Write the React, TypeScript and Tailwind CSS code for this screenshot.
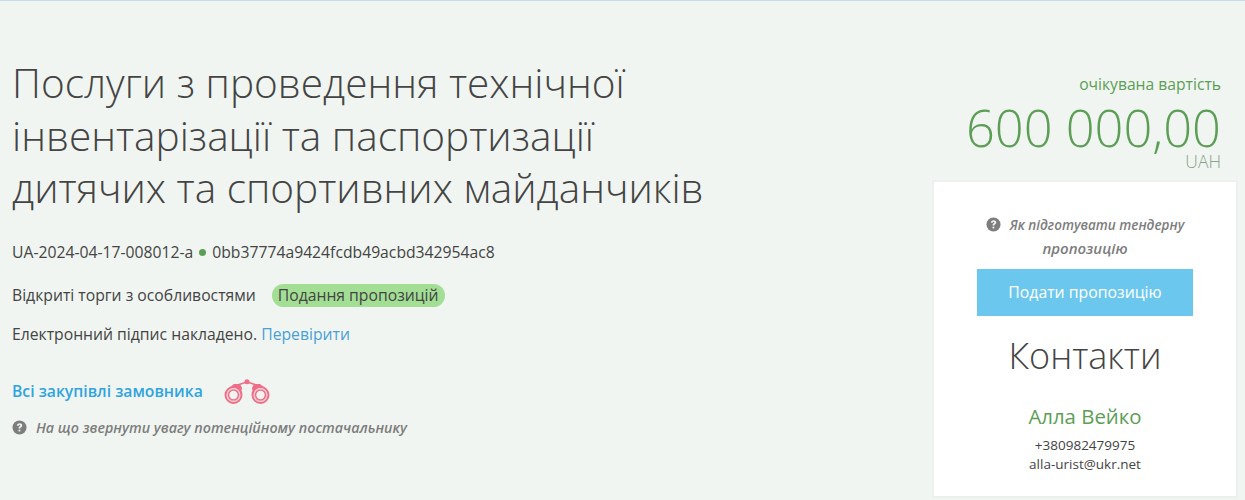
const HelpIcon = ({ className }: { className: string }) => (
  <svg viewBox="0 0 16 16" className={className}>
    <circle cx="8" cy="8" r="7.5" fill="#7d7d7d" />
    <path d="M5.2 6.1c0-1.6 1.2-2.6 2.9-2.6 1.6 0 2.8 1 2.8 2.3 0 1.1-.7 1.6-1.4 2.1-.5.3-.7.6-.7 1.2H7c0-1.1.3-1.6 1-2.1.6-.4.9-.7.9-1.1 0-.5-.3-.8-.8-.8-.6 0-1 .4-1 1.1z" fill="#f0f5f1" />
    <rect x="7" y="10.3" width="1.9" height="1.9" fill="#f0f5f1" />
  </svg>
);

const Binoculars = () => (
  <svg viewBox="0 0 46 26" className="w-[46px] h-[26px] ml-[21px]" fill="none" stroke="#ee6f87">
    <circle cx="9.5" cy="16" r="6.6" fill="#f7bcc7" strokeWidth="0" />
    <circle cx="36.5" cy="16" r="6.6" fill="#f7bcc7" strokeWidth="0" />
    <circle cx="9.5" cy="16" r="8" strokeWidth="2" />
    <circle cx="9.5" cy="16" r="4.9" strokeWidth="1.4" fill="#f0f5f1" />
    <circle cx="36.5" cy="16" r="8" strokeWidth="2" />
    <circle cx="36.5" cy="16" r="4.9" strokeWidth="1.4" fill="#f0f5f1" />
    <path d="M5 9 L10 5 L16 5 L18 9 L17 15 L14 9 Z M41 9 L36 5 L30 5 L28 9 L29 15 L32 9 Z" fill="#ee6f87" stroke="none" />
    <path d="M15 5.5 L23 3 L31 5.5" strokeWidth="1.5" />
    <circle cx="23" cy="2.8" r="2.5" fill="#ee6f87" stroke="none" />
  </svg>
);

export default function App() {
  return (
    <div className="h-[500px] overflow-hidden bg-[#f0f5f1] border-t border-[#c5dbe6] font-['Open_Sans',sans-serif] text-[#444] flex">
      <div className="w-[932px] pl-3 pt-[56px]">
        <h1 className="w-[720px] text-[40.55px] leading-[52.5px] font-light">
          Послуги з проведення технічної інвентарізації та паспортизації дитячих та спортивних майданчиків
        </h1>
        <div className="mt-[27px] text-[15.72px] leading-5 flex items-center">
          UA-2024-04-17-008012-a
          <span className="w-[7px] h-[7px] rounded-full bg-[#5c9e55] mx-[6px] mt-[2px]"></span>
          0bb37774a9424fcdb49acbd342954ac8
        </div>
        <div className="mt-[22px] text-[15.72px] leading-5 flex items-center">
          Відкриті торги з особливостями
          <span className="ml-4 bg-[#a3de95] rounded-full px-[6px] h-[23px] leading-[23px]">Подання пропозицій</span>
        </div>
        <div className="mt-[17px] text-[15.72px] leading-5">
          Електронний підпис накладено. <a className="text-[#4a9fd8]">Перевірити</a>
        </div>
        <div className="mt-[32px] flex items-center h-[32px]">
          <a className="text-[15.72px] font-semibold text-[#2fa4e0]">Всі закупівлі замовника</a>
          <Binoculars />
        </div>
        <div className="mt-[9px] flex items-center text-[14.27px] font-semibold italic text-[#7d7d7d]">
          <HelpIcon className="w-[15px] h-[15px] mr-[9px]" />
          На що звернути увагу потенційному постачальнику
        </div>
      </div>
      <div className="w-[306px] pt-[73px]">
        <div className="pr-[17px] text-right text-[#5c9e55]">
          <div className="text-[15.66px] leading-5">очікувана вартість</div>
          <div className="mt-[6px] text-[50.6px] leading-[56px] font-light">600 000,00</div>
          <div className="text-[17.5px] leading-4 font-light text-[#8aa08a] -mt-[3px]">UAH</div>
        </div>
        <div className="mt-[11px] h-[318px] bg-white border-2 border-[#ebefed] text-center">
          <div className="px-10 pt-[31px] text-[13.5px] leading-[24px] font-semibold italic text-[#7d7d7d]">
            <HelpIcon className="inline-block w-[15px] h-[15px] mr-[9px] mb-[3px]" />
            Як підготувати тендерну <span className="text-[15px] leading-[20px]">пропозицію</span>
          </div>
          <button className="mt-[8px] w-[216px] h-[47px] bg-[#6cc7ee] text-white text-[15.8px]">Подати пропозицію</button>
          <div className="mt-[15px] text-[36px] leading-[50px] font-light">Контакти</div>
          <div className="mt-[21px] text-[20.4px] leading-[28px] text-[#5c9e55]">Алла Вейко</div>
          <div className="mt-[6px] text-[13.5px] leading-[19px]">+380982479975</div>
          <div className="text-[13.5px] leading-[19px]">alla-urist@ukr.net</div>
        </div>
      </div>
    </div>
  );
}
